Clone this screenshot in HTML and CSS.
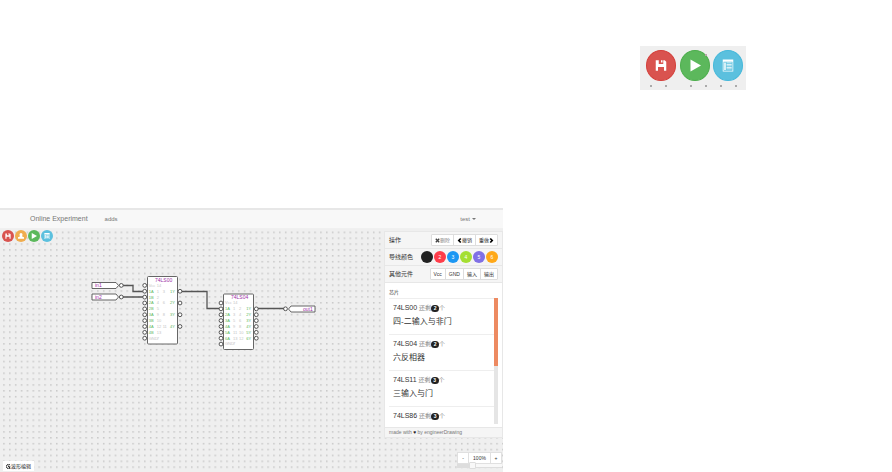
FILE: index.html
```html
<!DOCTYPE html>
<html lang="zh-CN">
<head>
<meta charset="utf-8">
<title>Online Experiment</title>
<link rel="stylesheet" href="styles.css">
</head>
<body>
<svg class="symbols" aria-hidden="true">
  <symbol id="save" viewBox="0 0 16 16"><path fill-rule="evenodd" d="M1 1h12l2 2v12h-3v-5H4v5H1zM5 1v5h6V1zM8 1h2v3H8z"/></symbol>
  <symbol id="play" viewBox="0 0 16 16"><path d="M2 0l14 8-14 8z"/></symbol>
  <symbol id="user" viewBox="0 0 16 16"><path d="M4 4a4 4 0 0 1 8 0c0 2-1 3-1 5l5 2v4H0v-4l5-2c0-2-1-3-1-5z"/></symbol>
  <symbol id="list" viewBox="0 0 16 16"><path fill-rule="evenodd" d="M1 0h14v16H1zM2 3v12h12V3z"/><path d="M3 4h2v10H3zM6 4h7v1H6zM6 6h7v1H6zM6 8h7v1H6zM6 10h7v1H6zM6 12h7v1H6z"/></symbol>
  <symbol id="left" viewBox="0 0 16 16"><path d="M10 0l4 3-5 5 5 5-4 3-8-8z"/></symbol>
  <symbol id="right" viewBox="0 0 16 16"><path d="M6 0L2 3l5 5-5 5 4 3 8-8z"/></symbol>
  <symbol id="cross" viewBox="0 0 16 16"><path d="M1 4l3-3 4 4 4-4 3 3-4 4 4 4-3 3-4-4-4 4-3-3 4-4z"/></symbol>
</svg>

<aside class="preview">
  <div class="preview-card">
    <div class="preview-buttons">
      <button class="round red" aria-label="Save"><svg><use href="#save"/></svg></button>
      <button class="round green" aria-label="Run"><svg><use href="#play"/></svg></button>
      <button class="round blue" aria-label="List"><svg><use href="#list"/></svg></button>
    </div>
    <svg class="preview-dots" viewBox="0 0 106 4" aria-hidden="true"><path d="M10 1h2v2h-2zM25 1h2v2h-2zM50 1h2v2h-2zM65 1h2v2h-2zM80 1h2v2h-2zM95 1h2v2h-2z"/></svg>
  </div>
</aside>

<div class="app">
  <header class="navbar">
    <a class="brand" href="#">Online Experiment</a>
    <a class="link" href="#">adds</a>
    <a class="account" href="#">test <span class="caret"></span></a>
  </header>
  <main class="workspace">
    <svg class="canvas" width="503" height="243" aria-label="Circuit">
      <defs>
        <pattern id="dots" x="1.2" y="0.6" width="5.87" height="5.87" patternUnits="userSpaceOnUse"><rect x="2" y="2" width="1.5" height="1.5" fill="#c6c6c6"/></pattern>
      </defs>
      <rect width="503" height="243" fill="url(#dots)"/>
      <g class="wires">
        <path d="M123 56.500h10v6h10M123 68h20M181 62.500h26v17h12M258 79.500h26"/>
      </g>
      <g class="shapes">
        <path d="M92 53.500h24l2.500 3-2.500 3H92zM92 65h24l2.500 3-2.500 3H92zM315 77h-24l-2.500 3 2.500 3h24z"/>
        <rect x="147.500" y="47.500" width="30" height="67.500" rx="1"/>
        <rect x="223.500" y="65" width="30" height="55.500" rx="1"/>
      </g>
      <g class="pins" id="pins"></g>
      <g class="texts" id="texts">
        <text x="95" y="58">in1</text><text x="95" y="70">in2</text><text x="303" y="82">out1</text>
        <text x="155" y="53">74LS00</text><text x="231" y="70">74LS04</text>
      </g>
    </svg>
    <nav class="tools">
      <button class="round red" aria-label="Save"><svg><use href="#save"/></svg></button>
      <button class="round orange" aria-label="User"><svg><use href="#user"/></svg></button>
      <button class="round green" aria-label="Run"><svg><use href="#play"/></svg></button>
      <button class="round blue" aria-label="List"><svg><use href="#list"/></svg></button>
    </nav>
    <section class="panel">
      <div class="row"><span>操作</span>
        <div class="group"><button class="muted"><svg><use href="#cross"/></svg>删除</button><button><svg><use href="#left"/></svg>撤销</button><button>重做<svg><use href="#right"/></svg></button></div>
      </div>
      <div class="row"><span>导线颜色</span>
        <div class="colors"><button class="c1" aria-label="1"></button><button class="c2">2</button><button class="c3">3</button><button class="c4">4</button><button class="c5">5</button><button class="c6">6</button></div>
      </div>
      <div class="row"><span>其他元件</span>
        <div class="group"><button>Vcc</button><button>GND</button><button>输入</button><button>输出</button></div>
      </div>
      <div class="chips">
        <h2>芯片</h2>
        <ul>
          <li><h3>74LS00 <small>还剩<b>2</b>个</small></h3><p>四-二输入与非门</p></li>
          <li><h3>74LS04 <small>还剩<b>2</b>个</small></h3><p>六反相器</p></li>
          <li><h3>74LS11 <small>还剩<b>3</b>个</small></h3><p>三输入与门</p></li>
          <li><h3>74LS86 <small>还剩<b>3</b>个</small></h3></li>
        </ul>
      </div>
      <footer>made with <span class="heart">♥</span> by engineerDrawing</footer>
    </section>
    <button class="wave"><svg viewBox="0 0 16 16"><path d="M13 3a7 7 0 1 0 0 10M8 8l6 6M8 5v4h6" fill="none" stroke="#222" stroke-width="3"/></svg>波形编辑</button>
    <div class="zoom">
      <div class="zoom-buttons"><button>-</button><output>100%</output><button>+</button></div>
      <input type="range" aria-label="Zoom" min="0" max="100" value="32">
    </div>
  </main>
</div>
<script src="circuit.js"></script>
</body>
</html>
```
FILE: styles.css
```css
* { box-sizing: border-box; }
body {
  margin: 0;
  min-height: 100vh;
  display: flex;
  flex-direction: column;
  background: #fff;
  color: #333;
  font: 6px/8px "Liberation Sans", "Noto Sans CJK SC", sans-serif;
}
button { font: inherit; color: inherit; margin: 0; padding: 0; border: 0; background: #fff; }
a { color: #777; text-decoration: none; }
h2, h3, p, ul { margin: 0; padding: 0; font-weight: 400; }
.symbols { position: absolute; width: 0; height: 0; }

.preview { flex: 1 0 208px; display: flex; justify-content: flex-end; align-items: flex-start; padding: 46px 146px 0 0; }
.preview-card { width: 106px; height: 44px; padding-top: 4px; background: #efefef; }
.preview-buttons { display: flex; justify-content: space-between; padding: 0 3px 0 6px; }
.preview-dots { display: block; width: 106px; height: 4px; margin-top: 3px; fill: #aaa; }
.round { position: relative; display: flex; align-items: center; justify-content: center; border-radius: 50%; color: #fff; }
.round svg { fill: #fff; }
.preview .round { width: 30px; height: 31px; }
.preview .round svg { width: 12px; height: 13px; }
.red { background: #d9534f; }
.green { background: #5cb85c; }
.blue { background: #5bc0de; }
.orange { background: #f0ad4e; }
.preview .red { border: 1px solid #d43f3a; }
.preview .green { border: 1px solid #4cae4c; }
.preview .blue { border: 1px solid #46b8da; }
.preview .green::after { content: ""; position: absolute; top: 3px; right: 2px; width: 2px; height: 2px; background: #b8a8a8; }

.app { width: 503px; max-width: 100%; border-top: 2px solid #e7e7e7; }
.navbar { height: 19px; display: flex; align-items: center; padding: 0 27px 0 30px; background: #f8f8f8; border-bottom: 1px solid #f0f0f0; }
.brand { font-size: 7px; }
.link { margin-left: 17px; }
.account { margin-left: auto; display: flex; align-items: center; gap: 2px; }
.caret { border: 2px solid transparent; border-top-color: #777; border-bottom: 0; }

.workspace { position: relative; height: 243px; overflow: hidden; background: #efefef; }
.canvas { position: absolute; inset: 0; }
.wires path { fill: none; stroke: #555; stroke-width: 1.3; }
.shapes * { fill: #fff; stroke: #555; stroke-width: 0.9; }
.pins circle { fill: #fff; stroke: #444; stroke-width: 0.9; }
.texts text { font: 5px "Liberation Sans", sans-serif; fill: #a030a8; }
.texts .in, .texts .out { font-size: 4px; fill: #5cb860; }
.texts .num { font-size: 4px; fill: #c4c4c4; }

.tools { position: relative; display: flex; gap: 1px; padding: 1px 2px; }
.tools .round { width: 12px; height: 12px; }
.tools .round svg { width: 6px; height: 6px; }

.panel { position: absolute; top: 2px; right: 0; width: 119px; background: #f5f5f5; border: 1px solid #e7e7e7; }
.row { display: flex; align-items: center; justify-content: space-between; height: 17px; padding: 0 4px; border-bottom: 1px solid #e7e7e7; }
.group { display: flex; border: 1px solid #ddd; border-radius: 1px; }
.group button { height: 10px; padding: 0 3px; font-size: 5px; line-height: 10px; }
.group button + button { border-left: 1px solid #ddd; }
.group svg { width: 5px; height: 5px; vertical-align: -1px; }
.group .muted { color: #888; }
.group .muted svg { fill: #444; }
.colors { display: flex; gap: 1px; }
.colors button { width: 12px; height: 12px; border-radius: 50%; color: #fff; font-size: 5px; }
.colors .c1 { background: #222; }
.colors .c2 { background: #ff3d4a; }
.colors .c3 { background: #1c97f3; }
.colors .c4 { background: #a5df32; }
.colors .c5 { background: #8070e5; }
.colors .c6 { background: #ffa818; }
.chips { height: 145px; padding: 5px 4px 0; background: #fff; border-bottom: 1px solid #e7e7e7; }
.chips h2 { height: 10px; font-size: 5px; }
.chips ul { height: 126px; overflow: hidden; list-style: none; border: 0 solid; border-image: linear-gradient(#ed8a61 54%, #e5e5e5 54%) 1; border-right-width: 4px; }
.chips li { height: 36px; padding: 4px 4px 0; border-top: 1px solid #eee; }
.chips h3 { font-size: 7px; line-height: 10px; white-space: nowrap; }
.chips small { font-size: 6px; color: #888; }
.chips b { display: inline-block; width: 8px; border-radius: 4px; font-size: 5px; line-height: 7px; background: #222; color: #fff; text-align: center; }
.chips p { margin-top: 3px; font-size: 8px; line-height: 12px; }
footer { padding: 0 4px; font-size: 5px; line-height: 9px; color: #777; }
.heart { color: #222; }

.wave { position: absolute; left: 3px; bottom: 1px; width: 31px; height: 10px; font-size: 5px; color: #222; }
.wave svg { width: 5px; height: 5px; vertical-align: -1px; }
.zoom { position: absolute; right: 1px; bottom: 4px; width: 45px; }
.zoom-buttons { display: flex; border: 1px solid #e0e0e0; background: #fff; font-size: 5px; line-height: 10px; text-align: center; }
.zoom button { width: 10px; }
.zoom output { flex: 1; border: solid #e0e0e0; border-width: 0 1px; }
.zoom input { display: block; appearance: none; width: 100%; height: 4px; margin: 0; background: linear-gradient(to right, #ddd 32%, #f8f8f8 32%); border-bottom: 1px solid #ddd; }
.zoom input::-webkit-slider-thumb { appearance: none; width: 7px; height: 7px; border: 1px solid #ddd; border-radius: 1px; background: #f8f8f8; }
```
FILE: circuit.js
```js
const ns = "http://www.w3.org/2000/svg";
const pitch = 5.87;
const pins = document.getElementById("pins");
const texts = document.getElementById("texts");

function pin(x, y) {
  const c = document.createElementNS(ns, "circle");
  c.setAttribute("cx", x);
  c.setAttribute("cy", y);
  c.setAttribute("r", 1.9);
  pins.append(c);
}

function label(x, y, value, kind) {
  const t = document.createElementNS(ns, "text");
  t.setAttribute("x", x);
  t.setAttribute("y", y + 1.4);
  t.setAttribute("class", kind);
  t.textContent = value;
  texts.append(t);
}

function chip(left, right, top, rows) {
  rows.forEach(([name, numbers, out], i) => {
    const y = top + i * pitch;
    pin(left, y);
    label(left + 4, y, name, name.length > 2 ? "num" : "in");
    numbers.split(" ").forEach((n, k) => label(left + 12 + k * 6, y, n, "num"));
    if (out) {
      pin(right, y);
      label(right - 10, y, out, "out");
    }
  });
}

chip(144.7, 180, 56.4, [
  ["Vcc", "14"], ["1A", "1 3", "1Y"], ["1B", "2"], ["2A", "4 6", "2Y"],
  ["2B", "5"], ["3A", "9 8", "3Y"], ["3B", "10"], ["4A", "12 11", "4Y"],
  ["4B", "13"], ["GND", "7"]
]);
chip(221, 256.3, 74, [
  ["Vcc", "14"], ["1A", "1 2", "1Y"], ["2A", "3 4", "2Y"], ["3A", "5 6", "3Y"],
  ["4A", "9 8", "4Y"], ["5A", "11 10", "5Y"], ["6A", "13 12", "6Y"], ["GND", "7"]
]);
pin(121.3, 56.4);
pin(121.3, 68);
pin(285.5, 79.8);
```
